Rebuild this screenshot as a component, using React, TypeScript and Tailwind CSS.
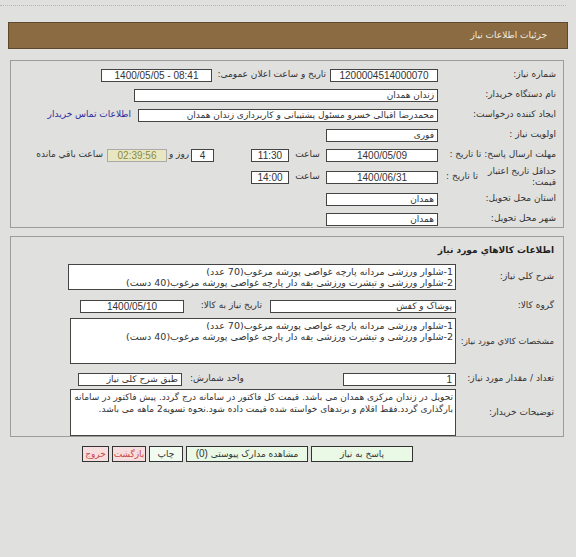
import type { ReactNode } from "react";

const num = '[font-family:"Liberation_Sans","DejaVu_Sans",sans-serif] text-[10px]';
const box = "h-[13px] border border-[#444] bg-white px-[3px] leading-[11px] text-[#333] whitespace-nowrap overflow-hidden";

function Box({ w, children, className = "" }: { w: string; children?: ReactNode; className?: string }) {
  return <div className={`${box} ${w} ${className}`}>{children}</div>;
}

function Row({ label, labelW = "w-[118px]", h = "h-[20px]", children }: { label: ReactNode; labelW?: string; h?: string; children?: ReactNode }) {
  return (
    <div className={`flex items-center ${h}`}>
      <div className={`${labelW} shrink-0 whitespace-nowrap`}>{label}</div>
      {children}
    </div>
  );
}

const items = [
  "1-شلوار ورزشی مردانه پارچه غواصی پورشه مرغوب(70 عدد)",
  "2-شلوار ورزشی و تیشرت ورزشی یقه دار پارچه غواصی پورشه مرغوب(40 دست)",
];

function Lines() {
  return (
    <>
      {items.map((l) => (
        <div key={l} className="whitespace-nowrap overflow-hidden text-[9.5px]">{l}</div>
      ))}
    </>
  );
}

export default function App() {
  return (
    <div
      dir="rtl"
      className="relative w-[576px] h-[557px] overflow-hidden bg-[#e0e0df] text-[9px] text-[#333]"
      style={{ fontFamily: '"DejaVu Sans", Tahoma, sans-serif' }}
    >
      <div className="h-[6px] mr-[10px] border-b border-dotted border-[#b5b5b5]" />

      <div className="mt-[16px] mx-[8px] h-[27px] bg-[#8b6c42] border border-[#5d4a2e] flex items-center pr-[20px] text-[9px] text-[#f1ece0]">
        جزئیات اطلاعات نیاز
      </div>

      {/* panel 1 */}
      <div className="mt-[11px] mr-[12px] ml-[10px] h-[168px] border border-[#9c9c9c] pr-[7px] pt-[4px]">
        <Row label="شماره نیاز:">
          <Box w="w-[108px]" className={`text-center ${num}`}>1200004514000070</Box>
          <div className="w-[118px] pr-[4px] whitespace-nowrap">تاریخ و ساعت اعلان عمومی:</div>
          <Box w="w-[111px]" className={`text-center ${num}`}>
            <span dir="ltr">1400/05/05 - 08:41</span>
          </Box>
        </Row>
        <Row label="نام دستگاه خریدار:">
          <Box w="w-[304px]">زندان همدان</Box>
        </Row>
        <Row label="ایجاد کننده درخواست:">
          <Box w="w-[300px]">محمدرضا اقبالی خسرو مسئول پشتیبانی و کاربردازی زندان همدان</Box>
          <span className="mr-[7px] text-[#2c2c9c] whitespace-nowrap">اطلاعات تماس خریدار</span>
        </Row>
        <Row label="اولویت نیاز :">
          <Box w="w-[112px]">فوری</Box>
        </Row>
        <Row label="مهلت ارسال پاسخ: تا تاریخ :">
          <Box w="w-[112px]" className={`text-center ${num}`}>1400/05/09</Box>
          <div className="w-[37px] text-center">ساعت</div>
          <Box w="w-[38px]" className={`text-center ${num}`}>11:30</Box>
          <div className="w-[37px]" />
          <Box w="w-[23px]" className={`text-center ${num}`}>4</Box>
          <div className="w-[24px] text-center whitespace-nowrap">روز و</div>
          <div className={`h-[13px] w-[60px] border border-[#aaa] bg-[#e9e7c2] text-center leading-[11px] text-[#8a8a3a] ${num}`}>02:39:56</div>
          <div className="pr-[4px] whitespace-nowrap">ساعت باقي مانده</div>
        </Row>
        <Row
          h="h-[24px]"
          label={
            <div className="flex items-center">
              <div className="w-[70px] whitespace-normal leading-[11px]">حداقل تاریخ اعتبار قیمت:</div>
              <div className="w-[48px] text-center">تا تاریخ :</div>
            </div>
          }
        >
          <Box w="w-[112px]" className={`text-center ${num}`}>1400/06/31</Box>
          <div className="w-[37px] text-center">ساعت</div>
          <Box w="w-[38px]" className={`text-center ${num}`}>14:00</Box>
        </Row>
        <Row label="استان محل تحویل:">
          <Box w="w-[112px]">همدان</Box>
        </Row>
        <Row label="شهر محل تحویل:">
          <Box w="w-[112px]">همدان</Box>
        </Row>
      </div>

      {/* panel 2 */}
      <div className="mt-[8px] mr-[12px] ml-[10px] h-[201px] border border-[#9c9c9c] pr-[9px] pt-[6px]">
        <div className="font-bold text-[9px] text-[#222] h-[16px] leading-[14px]">اطلاعات کالاهاي مورد نياز</div>
        <div className="mt-[5px] flex items-center">
          <div className="w-[98px] shrink-0">شرح کلي نياز:</div>
          <div className="w-[388px] border border-[#444] bg-white px-[2px] py-[1px] leading-[11px]">
            <Lines />
          </div>
        </div>
        <div className="mt-[10px] flex items-center h-[12px]">
          <div className="w-[98px] shrink-0">گروه کالا:</div>
          <Box w="w-[186px]">پوشاک و کفش</Box>
          <div className="w-[86px] pr-[8px] whitespace-nowrap">تاریخ نیاز به کالا:</div>
          <Box w="w-[104px]" className={`text-center ${num}`}>1400/05/10</Box>
        </div>
        <div className="mt-[6px] flex items-center">
          <div className="w-[98px] shrink-0 whitespace-nowrap text-[8.5px]">مشخصات کالاي مورد نياز:</div>
          <div className="w-[386px] h-[46px] border border-[#444] bg-white px-[2px] py-[1px] leading-[11px]">
            <Lines />
          </div>
        </div>
        <div className="mt-[9px] flex items-center h-[12px]">
          <div className="w-[98px] shrink-0 whitespace-nowrap">تعداد / مقدار مورد نیاز:</div>
          <Box w="w-[113px]" className={num}>1</Box>
          <div className="w-[161px] text-left pl-[8px] whitespace-nowrap">واحد شمارش:</div>
          <Box w="w-[104px]">طبق شرح کلی نیاز</Box>
        </div>
        <div className="mt-[4px] flex items-center">
          <div className="w-[98px] shrink-0">توضیحات خریدار:</div>
          <div className="w-[386px] h-[47px] border border-[#444] bg-white px-[2px] py-[1px] leading-[12px] whitespace-normal">
            تحویل در زندان مرکزی همدان می باشد. قیمت کل فاکتور در سامانه درج گردد. پیش فاکتور در سامانه بارگذاری گردد.فقط اقلام و برندهای خواسته شده قیمت داده شود.نحوه تسویه2 ماهه می باشد.
          </div>
        </div>
      </div>

      {/* buttons */}
      <div className="mt-[9px] flex pr-[163px] gap-[3px] text-[9px]">
        <div className="w-[102px] h-[16px] border border-[#333] bg-[#e9f9e6] text-center leading-[14px]">پاسخ به نیاز</div>
        <div className="w-[122px] h-[16px] border border-[#333] bg-[#e9f9e6] text-center leading-[14px]">
          مشاهده مدارک پیوستی <span className={num}>(0)</span>
        </div>
        <div className="w-[34px] h-[16px] border border-[#333] bg-[#f1fbef] text-center leading-[14px]">چاپ</div>
        <div className="w-[34px] h-[16px] border border-[#333] bg-[#f7dede] text-center leading-[14px] text-[#c84848]">بازگشت</div>
        <div className="w-[27px] h-[16px] border border-[#333] bg-[#f7dede] text-center leading-[14px] text-[#c84848]">خروج</div>
      </div>
    </div>
  );
}
